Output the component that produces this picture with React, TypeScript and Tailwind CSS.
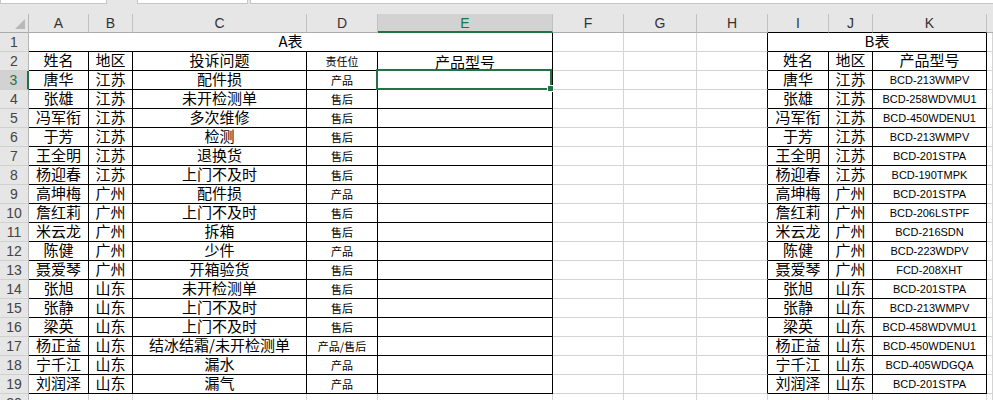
import type { ReactNode } from "react";

const A_ROWS: [string, string, string, string][] = [
  ["唐华", "江苏", "配件损", "产品"],
  ["张雄", "江苏", "未开检测单", "售后"],
  ["冯军衔", "江苏", "多次维修", "售后"],
  ["于芳", "江苏", "检测", "售后"],
  ["王全明", "江苏", "退换货", "售后"],
  ["杨迎春", "江苏", "上门不及时", "售后"],
  ["高坤梅", "广州", "配件损", "产品"],
  ["詹红莉", "广州", "上门不及时", "售后"],
  ["米云龙", "广州", "拆箱", "售后"],
  ["陈健", "广州", "少件", "产品"],
  ["聂爱琴", "广州", "开箱验货", "售后"],
  ["张旭", "山东", "未开检测单", "售后"],
  ["张静", "山东", "上门不及时", "售后"],
  ["梁英", "山东", "上门不及时", "售后"],
  ["杨正益", "山东", "结冰结霜/未开检测单", "产品/售后"],
  ["宁千江", "山东", "漏水", "产品"],
  ["刘润泽", "山东", "漏气", "产品"],
];

const B_ROWS: [string, string, string][] = [
  ["唐华", "江苏", "BCD-213WMPV"],
  ["张雄", "江苏", "BCD-258WDVMU1"],
  ["冯军衔", "江苏", "BCD-450WDENU1"],
  ["于芳", "江苏", "BCD-213WMPV"],
  ["王全明", "江苏", "BCD-201STPA"],
  ["杨迎春", "江苏", "BCD-190TMPK"],
  ["高坤梅", "广州", "BCD-201STPA"],
  ["詹红莉", "广州", "BCD-206LSTPF"],
  ["米云龙", "广州", "BCD-216SDN"],
  ["陈健", "广州", "BCD-223WDPV"],
  ["聂爱琴", "广州", "FCD-208XHT"],
  ["张旭", "山东", "BCD-201STPA"],
  ["张静", "山东", "BCD-213WMPV"],
  ["梁英", "山东", "BCD-458WDVMU1"],
  ["杨正益", "山东", "BCD-450WDENU1"],
  ["宁千江", "山东", "BCD-405WDGQA"],
  ["刘润泽", "山东", "BCD-201STPA"],
];

const LETTERS = ["A", "B", "C", "D", "E", "F", "G", "H", "I", "J", "K"];

function Cell({
  right,
  bottom,
  span,
  small,
  children,
  extra,
}: {
  right?: boolean;
  bottom?: boolean;
  span?: "5" | "3";
  small?: "cn" | "en";
  children?: ReactNode;
  extra?: ReactNode;
}) {
  const rb = right ? "border-r-black" : "border-r-[#d4d4d4]";
  const bb = bottom ? "border-b-black" : "border-b-[#d4d4d4]";
  const sp = span === "5" ? "col-span-5" : span === "3" ? "col-span-3" : "";
  const size =
    small === "cn"
      ? "text-[11px] leading-[12px]"
      : small === "en"
        ? "text-[11px] leading-[12px] font-['Liberation_Sans','Noto_Sans_CJK_SC',sans-serif]"
        : "text-[15px] leading-[16px] pb-[2px]";
  return (
    <div
      className={`relative h-[19px] border-r border-b ${rb} ${bb} ${sp} ${size} flex items-center justify-center whitespace-nowrap text-black`}
    >
      {children}
      {extra}
    </div>
  );
}

function RowHead({ n, active }: { n: number; active?: boolean }) {
  return (
    <div
      className={`h-[19px] flex items-center justify-center border-b border-b-[#d0d0d0] text-[14px] leading-[16px] font-['Liberation_Sans',sans-serif] ${
        active
          ? "bg-[#d2d2d2] border-r-2 border-r-[#217346] text-[#217346]"
          : "bg-[#e6e6e6] border-r border-r-[#b5b5b5] text-[#444]"
      }`}
    >
      {n}
    </div>
  );
}

function Selection() {
  return (
    <div className="absolute -left-[2px] -top-[2px] right-0 -bottom-[1px] border-2 border-[#217346] z-10">
      <div className="absolute -right-[4px] -bottom-[4px] w-[7px] h-[7px] bg-[#217346] border border-white" />
    </div>
  );
}

export default function App() {
  return (
    <div className="w-[993px] h-[400px] overflow-hidden bg-white font-['Noto_Sans_CJK_SC',sans-serif]">
      {/* bottom edge of name box / formula bar */}
      <div className="h-[14px] bg-[#e6e6e6] flex items-start">
        <div className="w-[107px] h-[4px] bg-white border border-t-0 border-[#c6c6c6]" />
        <div className="w-[30px]" />
        <div className="w-[111px] h-[4px] bg-white border border-t-0 border-[#c6c6c6]" />
        <div className="w-[2px]" />
        <div className="flex-1 h-[4px] bg-white border border-t-0 border-r-0 border-[#c6c6c6]" />
      </div>

      <div className="grid grid-cols-[29px_60px_44px_174px_71px_175px_71px_73px_71px_61px_44px_114px_1fr]">
        {/* column headers */}
        <div className="relative h-[19px] bg-[#e6e6e6] border-r border-b border-r-[#b5b5b5] border-b-[#ababab]">
          <svg className="absolute right-[3px] bottom-[3px]" width="10" height="10" viewBox="0 0 10 10">
            <polygon points="10,0 10,10 0,10" fill="#b8b8b8" />
          </svg>
        </div>
        {LETTERS.map((l, i) => {
          const sel = l === "E";
          const top = i >= 8;
          return (
            <div
              key={l}
              className={`h-[19px] flex items-center justify-center text-[14px] leading-[16px] font-['Liberation_Sans',sans-serif] border-r border-r-[#c0c0c0] ${
                sel
                  ? "bg-[#d2d2d2] text-[#217346] border-b-2 border-b-[#217346]"
                  : top
                    ? "bg-[#e6e6e6] text-[#333] border-b border-b-black"
                    : "bg-[#e6e6e6] text-[#333] border-b border-b-[#ababab]"
              }`}
            >
              {l}
            </div>
          );
        })}
        <div className="h-[19px] bg-[#e6e6e6] border-b border-b-[#ababab]" />

        {/* row 1 */}
        <RowHead n={1} />
        <Cell span="5" right bottom>
          A表
        </Cell>
        <Cell />
        <Cell />
        <Cell right />
        <Cell span="3" right bottom>
          B表
        </Cell>
        <Cell />

        {/* row 2 */}
        <RowHead n={2} />
        <Cell right bottom>
          姓名
        </Cell>
        <Cell right bottom>
          地区
        </Cell>
        <Cell right bottom>
          投诉问题
        </Cell>
        <Cell right bottom small="cn">
          责任位
        </Cell>
        <Cell right bottom>
          <span className="pt-[3px]">产品型号</span>
        </Cell>
        <Cell />
        <Cell />
        <Cell right />
        <Cell right bottom>
          姓名
        </Cell>
        <Cell right bottom>
          地区
        </Cell>
        <Cell right bottom>
          产品型号
        </Cell>
        <Cell />

        {A_ROWS.map((a, i) => {
          const b = B_ROWS[i];
          const n = i + 3;
          return [
            <RowHead key={`h${n}`} n={n} active={n === 3} />,
            <Cell key={`a${n}`} right bottom>
              {a[0]}
            </Cell>,
            <Cell key={`b${n}`} right bottom>
              {a[1]}
            </Cell>,
            <Cell key={`c${n}`} right bottom>
              {a[2]}
            </Cell>,
            <Cell key={`d${n}`} right bottom small="cn">
              {a[3]}
            </Cell>,
            <Cell key={`e${n}`} right bottom extra={n === 3 ? <Selection /> : null} />,
            <Cell key={`f${n}`} />,
            <Cell key={`g${n}`} />,
            <Cell key={`hh${n}`} right />,
            <Cell key={`i${n}`} right bottom>
              {b[0]}
            </Cell>,
            <Cell key={`j${n}`} right bottom>
              {b[1]}
            </Cell>,
            <Cell key={`k${n}`} right bottom small="en">
              {b[2]}
            </Cell>,
            <Cell key={`z${n}`} />,
          ];
        })}

        {/* row 20 */}
        <RowHead n={20} />
        {LETTERS.map((l) => (
          <Cell key={`r20${l}`} />
        ))}
        <Cell />
      </div>
    </div>
  );
}
